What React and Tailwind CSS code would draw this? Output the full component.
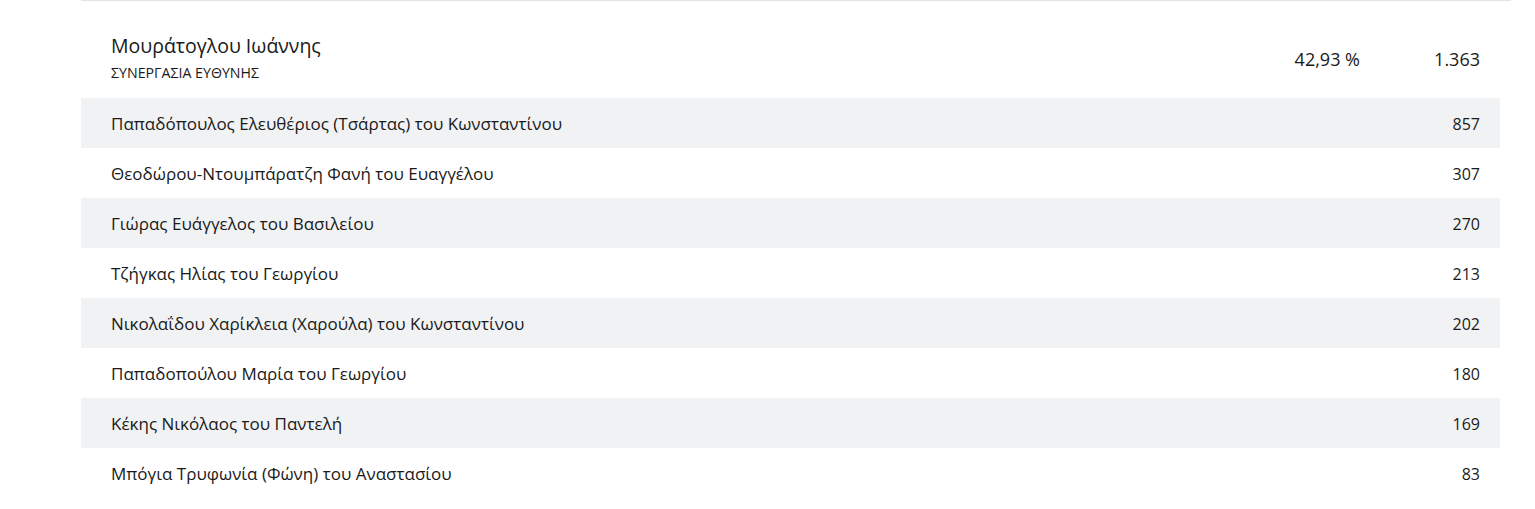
const candidates = [
  { name: 'Παπαδόπουλος Ελευθέριος (Τσάρτας) του Κωνσταντίνου', votes: '857' },
  { name: 'Θεοδώρου-Ντουμπάρατζη Φανή του Ευαγγέλου', votes: '307' },
  { name: 'Γιώρας Ευάγγελος του Βασιλείου', votes: '270' },
  { name: 'Τζήγκας Ηλίας του Γεωργίου', votes: '213' },
  { name: 'Νικολαΐδου Χαρίκλεια (Χαρούλα) του Κωνσταντίνου', votes: '202' },
  { name: 'Παπαδοπούλου Μαρία του Γεωργίου', votes: '180' },
  { name: 'Κέκης Νικόλαος του Παντελή', votes: '169' },
  { name: 'Μπόγια Τρυφωνία (Φώνη) του Αναστασίου', votes: '83' },
];

const App = () => {
  return (
    <div
      className="min-h-[509px] bg-white text-[#1a1a1a]"
      style={{ fontFamily: '"Open Sans", "Noto Sans", sans-serif' }}
    >
      <div className="ml-[81px] w-[1430px] border-t border-[#e3e3e3] pt-px">
        <div className="w-[1419px]">
          <div className="flex h-[96px] items-center pl-[30px] pr-[20px] pt-[14px]">
            <div className="flex-1">
              <div className="text-[19.5px] leading-[26px]">Μουράτογλου Ιωάννης</div>
              <div className="mt-[6px] text-[14.2px] leading-[16px]">ΣΥΝΕΡΓΑΣΙΑ ΕΥΘΥΝΗΣ</div>
            </div>
            <div className="w-[120px] pt-[4px] text-right text-[18px]">42,93 %</div>
            <div className="w-[120px] pt-[4px] text-right text-[18px]">1.363</div>
          </div>
          {candidates.map((c, i) => (
            <div
              key={c.name}
              className={`flex h-[50px] items-center justify-between pl-[30px] pr-[20px] pt-[2px] text-[17px] ${
                i % 2 === 0 ? 'bg-[#f1f2f4]' : 'bg-white'
              }`}
            >
              <span>{c.name}</span>
              <span className="text-[16px]">{c.votes}</span>
            </div>
          ))}
        </div>
      </div>
    </div>
  );
};

export default App;
